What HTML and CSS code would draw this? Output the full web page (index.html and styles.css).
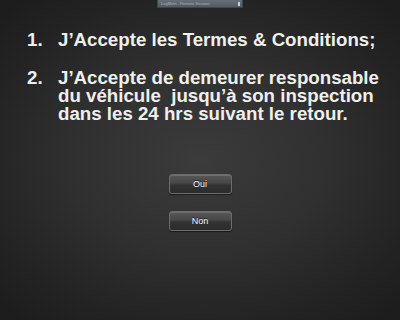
FILE: index.html
```html
<!DOCTYPE html>
<html lang="fr">
<head>
<meta charset="utf-8">
<title>Conditions</title>
<link rel="stylesheet" href="styles.css">
</head>
<body>
<div class="screen">
  <div class="topbar"><span class="topbar-title">LogMeIn - Remote Session</span><span class="topbar-arrow"></span></div>
  <ol class="terms">
    <li class="term"><span class="num">1.</span><span class="txt">J’Accepte les Termes &amp; Conditions;</span></li>
    <li class="term"><span class="num">2.</span><span class="txt">J’Accepte de demeurer responsable du véhicule &nbsp;jusqu’à son inspection dans les 24 hrs suivant le retour.</span></li>
  </ol>
  <div class="actions">
    <button class="btn">Oui</button>
    <button class="btn">Non</button>
  </div>
</div>
</body>
</html>
```

FILE: styles.css
```css
html, body {
  margin: 0;
  padding: 0;
}
body {
  width: 400px;
  height: 320px;
  overflow: hidden;
  background: #1c1c1c;
  font-family: "Liberation Sans", Arial, sans-serif;
}
.screen {
  position: relative;
  width: 400px;
  height: 320px;
  box-sizing: border-box;
  background: radial-gradient(ellipse 70% 65% at 50% 50%, #3b3b3b 0%, #303030 45%, #232323 80%, #1d1d1d 100%);
  display: flex;
  flex-direction: column;
  padding-top: 31px;
}
.topbar {
  position: absolute;
  left: 157px;
  top: 0;
  width: 86px;
  height: 8px;
  background: linear-gradient(#66707a, #525a62);
  border: 1px solid #3e454c;
  border-top: none;
  box-sizing: border-box;
  display: flex;
  align-items: center;
  justify-content: space-between;
  padding: 0 2px 0 3px;
}
.topbar-title {
  font-size: 4px;
  line-height: 6px;
  color: #a9b2ba;
  white-space: nowrap;
}
.topbar-arrow {
  width: 2px;
  height: 4px;
  background: #c8cfd5;
}
.terms {
  list-style: none;
  margin: 0;
  padding: 0 0 0 27px;
  display: flex;
  flex-direction: column;
  gap: 20px;
}
.term {
  display: grid;
  grid-template-columns: 31px 335px;
  color: #efefef;
  font-weight: bold;
  font-size: 18.7px;
  line-height: 18px;
}
.actions {
  margin-top: 51px;
  display: flex;
  flex-direction: column;
  align-items: center;
  gap: 17px;
}
.btn {
  width: 63px;
  height: 20px;
  margin: 0;
  padding: 0;
  border: 1px solid #6c6c6c;
  border-radius: 3px;
  background: linear-gradient(#575757 0%, #474747 45%, #333 55%, #2b2b2b 100%);
  box-shadow: inset 0 1px 0 rgba(255,255,255,0.15), 0 1px 1px rgba(0,0,0,0.5);
  color: #f4f4f4;
  font-family: "Liberation Sans", Arial, sans-serif;
  font-size: 9px;
  line-height: 18px;
  text-shadow: 0 -1px 0 rgba(0,0,0,0.6);
}
```
